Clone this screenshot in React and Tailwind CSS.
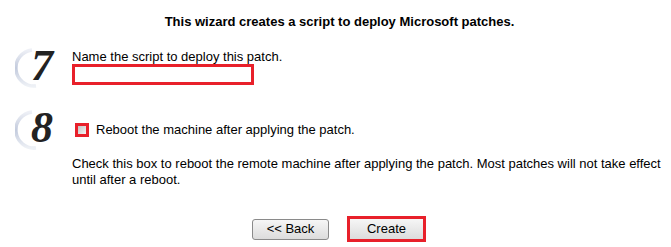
import React from "react";

const StepNumber = ({ n }) => (
  <div className="relative w-[40px] h-[40px] shrink-0">
    <svg width="40" height="40" viewBox="0 0 40 40" className="absolute left-0 top-0">
      <defs>
        <linearGradient id={`arc${n}`} x1="0" y1="0" x2="0" y2="1">
          <stop offset="0" stopColor="#eef0f6" />
          <stop offset="0.5" stopColor="#c3cbdd" />
          <stop offset="1" stopColor="#eef1f6" />
        </linearGradient>
      </defs>
      <path d="M17 2 A18 18 0 0 0 21 38" fill="none" stroke={`url(#arc${n})`} strokeWidth="3.5" />
    </svg>
    <span className="absolute left-[16px] top-[-6px] font-['Liberation_Serif',serif] italic font-bold text-[44px] leading-[48px] text-[#222]">
      {n}
    </span>
  </div>
);

export default function App() {
  return (
    <div className="w-[671px] h-[247px] bg-white text-black font-['Liberation_Sans',Arial,sans-serif] text-[13px] leading-[16px]">
      <div className="pt-[14px] pl-[8px] text-center font-bold text-[13px]">
        This wizard creates a script to deploy Microsoft patches.
      </div>

      {/* step 7 */}
      <div className="flex mt-[18px] pl-[15px]">
        <StepNumber n="7" />
        <div className="pl-[17px] pt-[2px]">
          <div className="leading-[14px]">Name the script to deploy this patch.</div>
          <input
            type="text"
            className="block w-[182px] h-[21px] border-[3px] border-[#e8202a] bg-white outline-none"
          />
        </div>
      </div>

      {/* step 8 */}
      <div className="flex mt-[22px] pl-[15px]">
        <StepNumber n="8" />
        <div className="pl-[17px] pt-[12px]">
          <label className="flex items-start gap-[7px] pl-[3px] h-[16px]">
            <span className="mt-[1px] w-[14px] h-[14px] border-[3px] border-[#e8202a] bg-gradient-to-br from-[#c4c4c4] to-[#f4f4f4] block" />
            <span>Reboot the machine after applying the patch.</span>
          </label>
          <p className="mt-[18px] w-[600px]">
            Check this box to reboot the remote machine after applying the patch. Most patches will not take effect until after a reboot.
          </p>
        </div>
      </div>

      {/* buttons */}
      <div className="flex justify-center items-center gap-[18px] mt-[28px] pl-[7px]">
        <button className="w-[77px] h-[21px] border border-[#8a8a8a] rounded-[3px] bg-gradient-to-b from-[#f6f6f6] to-[#dcdcdc] text-[13px] leading-[16px]">
          &lt;&lt; Back
        </button>
        <div className="border-[3px] border-[#e8202a]">
          <button className="block w-[73px] h-[20px] bg-gradient-to-b from-[#f6f6f6] to-[#dcdcdc] text-[13px] leading-[16px]">
            Create
          </button>
        </div>
      </div>
    </div>
  );
}
